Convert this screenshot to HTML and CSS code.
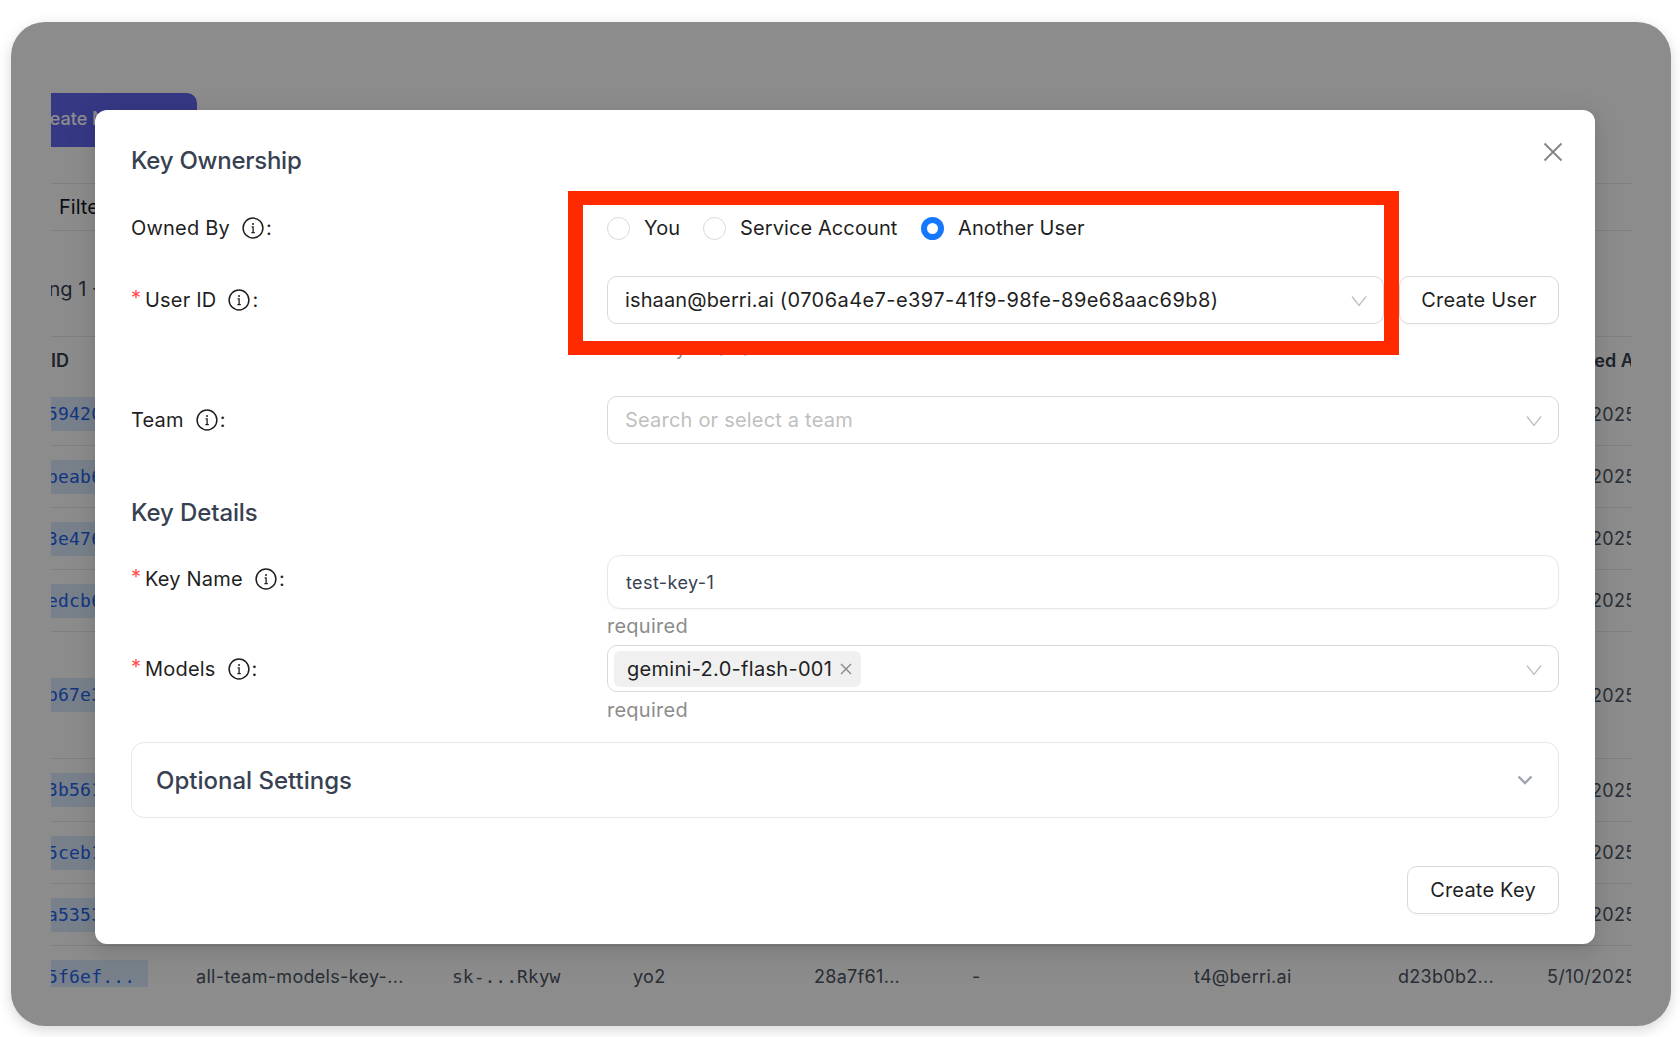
FILE: index.html
```html
<!DOCTYPE html>
<html lang="en">
<head>
<meta charset="utf-8">
<title>Key Ownership</title>
<link rel="stylesheet" href="styles.css">
</head>
<body>
<svg class="defs" width="0" height="0" aria-hidden="true">
  <symbol id="info" viewBox="0 0 22 22">
    <circle cx="11" cy="11" r="9.9" fill="none" stroke="currentColor" stroke-width="1.5"/>
    <circle cx="11" cy="6.9" r="1" fill="currentColor"/>
    <path d="M9.6 9.9H11.1V15.6M9.4 15.7H12.8" fill="none" stroke="currentColor" stroke-width="1.3"/>
  </symbol>
  <symbol id="chev" viewBox="0 0 16 12">
    <path d="M1 1.5 8 10.5 15 1.5" fill="none" stroke="currentColor" stroke-width="1.3"/>
  </symbol>
</svg>
<div class="window">
  <div class="backdrop">
    <div class="bg-button"><span class="bg-button-text">Create New Key</span></div>
    <div class="bg-filter">Filter</div>
    <div class="bg-showing">Showing 1 - 9</div>
    <div class="bg-table">
      <div class="bg-row bg-head"><span>ID</span><span class="date">Created At</span></div>
      <div class="bg-row r63"><span class="id">59420...</span><span class="date">5/10/2025</span></div>
      <div class="bg-row r62"><span class="id">beab6...</span><span class="date">5/10/2025</span></div>
      <div class="bg-row r62"><span class="id">3e476...</span><span class="date">5/10/2025</span></div>
      <div class="bg-row r62"><span class="id">edcb6...</span><span class="date">5/10/2025</span></div>
      <div class="bg-row r127"><span class="id">b67e3...</span><span class="date">5/10/2025</span></div>
      <div class="bg-row r63"><span class="id">3b561...</span><span class="date">5/10/2025</span></div>
      <div class="bg-row r62"><span class="id">5ceb1...</span><span class="date">5/10/2025</span></div>
      <div class="bg-row r62"><span class="id">a5353...</span><span class="date">5/10/2025</span></div>
      <div class="bg-row r62 last">
        <span class="id">5f6ef...</span>
        <span>all-team-models-key-...</span>
        <span class="mono">sk-...Rkyw</span>
        <span>yo2</span>
        <span>28a7f61...</span>
        <span>-</span>
        <span>t4@berri.ai</span>
        <span>d23b0b2...</span>
        <span class="date">5/10/2025</span>
      </div>
    </div>
  </div>

  <div class="overlay"></div>

  <main class="modal">
    <svg class="close" viewBox="0 0 20 20" aria-label="Close"><path d="M1.5 1.5 18.5 18.5M18.5 1.5 1.5 18.5" fill="none" stroke="currentColor" stroke-width="1.9"/></svg>

    <h2 class="section-title">Key Ownership</h2>

    <div class="row row-owned">
      <div class="label">Owned By<svg class="info"><use href="#info"/></svg><span class="colon">:</span></div>
      <div class="radios">
        <span class="radio"></span><span class="radio-text t-you">You</span>
        <span class="radio"></span><span class="radio-text t-service">Service Account</span>
        <span class="radio on"></span><span class="radio-text">Another User</span>
      </div>
    </div>

    <div class="row row-user">
      <div class="label"><span class="req">*</span>User ID<svg class="info"><use href="#info"/></svg><span class="colon">:</span></div>
      <div class="control">
        <div class="user-line">
          <div class="select select-user"><span class="user-mail">ishaan@berri.ai&nbsp;</span><span class="user-uid">(0706a4e7-e397-41f9-98fe-89e68aac69b8)</span><svg class="chev"><use href="#chev"/></svg></div>
          <div class="btn btn-user">Create User</div>
        </div>
        <div class="hint">Select by email address</div>
      </div>
    </div>

    <div class="row row-team">
      <div class="label">Team<svg class="info"><use href="#info"/></svg><span class="colon">:</span></div>
      <div class="select"><span class="placeholder">Search or select a team</span><svg class="chev"><use href="#chev"/></svg></div>
    </div>

    <h2 class="section-title details-title">Key Details</h2>

    <div class="row row-name">
      <div class="label"><span class="req">*</span>Key Name<svg class="info"><use href="#info"/></svg><span class="colon">:</span></div>
      <div class="control">
        <div class="input">test-key-1</div>
        <div class="required">required</div>
      </div>
    </div>

    <div class="row row-models">
      <div class="label"><span class="req">*</span>Models<svg class="info"><use href="#info"/></svg><span class="colon">:</span></div>
      <div class="control">
        <div class="select select-tags">
          <span class="tag">gemini-2.0-flash-001<svg class="tag-x" viewBox="0 0 12 12"><path d="M1 1 11 11M11 1 1 11" fill="none" stroke="currentColor" stroke-width="1.3"/></svg></span>
          <svg class="chev"><use href="#chev"/></svg>
        </div>
        <div class="required">required</div>
      </div>
    </div>

    <div class="accordion">
      <span>Optional Settings</span>
      <svg class="acc-chev" viewBox="0 0 16 10"><path d="M1.5 1.5 8 8 14.5 1.5" fill="none" stroke="currentColor" stroke-width="2.4"/></svg>
    </div>

    <div class="footer"><div class="btn btn-key">Create Key</div></div>
  </main>

  <div class="callout"></div>
</div>
</body>
</html>
```
FILE: styles.css
```css
* { box-sizing: border-box; }

html, body { margin: 0; height: 100%; background: #fff; }

body {
  font-family: Inter, "Noto Sans", sans-serif;
  overflow: hidden;
  position: relative;
}

.defs { position: absolute; }

/* Photographed window */
.window {
  position: absolute;
  left: 11px;
  top: 22px;
  width: 1660px;
  height: 1004px;
  border-radius: 34px;
  background: #fff;
  box-shadow: 0 4px 14px rgba(0, 0, 0, .16);
}

/* Page behind the dialog */
.backdrop {
  position: absolute;
  left: 40px;
  top: 71px;
  width: 1580px;
  height: 894px;
  overflow: hidden;
  font-size: 18px;
  color: #6b7280;
}

.bg-button {
  width: 146px;
  height: 54px;
  padding-bottom: 3px;
  background: #6366f1;
  border-radius: 0 10px 0 0;
  display: flex;
  align-items: center;
  overflow: hidden;
  white-space: nowrap;
}

.bg-button-text {
  color: #fff;
  font-weight: 500;
  margin-left: -21px;
}

.bg-filter {
  height: 48px;
  margin-top: 36px;
  padding-left: 8px;
  line-height: 46px;
  font-size: 20px;
  color: #111827;
  border-top: 1px solid #e5e7eb;
  border-bottom: 1px solid #e5e7eb;
}

.bg-showing {
  height: 105px;
  line-height: 117px;
  font-size: 20px;
  margin-left: -60px;
  color: #374151;
  white-space: nowrap;
}

.bg-row {
  display: grid;
  grid-template-columns: 145px 256px 181px 181px 158px 222px 204px 149px 84px;
  align-items: center;
  border-bottom: 1px solid #e5e7eb;
  white-space: nowrap;
  letter-spacing: .3px;
  color: #4b5563;
}

.bg-row > .date { grid-column: 9; overflow: hidden; }
.last > .date { grid-column: auto; }

.bg-head {
  height: 47px;
  border-bottom: 0;
  border-top: 1px solid #e5e7eb;
  font-weight: 600;
  letter-spacing: 0;
  color: #374151;
}

.r62 { height: 62px; }
.r63 { height: 63px; }
.r127 { height: 127px; }

.id {
  justify-self: start;
  width: 97px;
  height: 34px;
  line-height: 33px;
  background: #dbeafe;
  color: #2563eb;
  font-family: "DejaVu Sans Mono", monospace;
  letter-spacing: .2px;
  overflow: hidden;
  text-indent: -4px;
}

.mono { font-family: "DejaVu Sans Mono", monospace; letter-spacing: 0; }

.overlay {
  position: absolute;
  inset: 0;
  border-radius: 34px;
  background: rgba(0, 0, 0, .45);
}

/* Dialog */
.modal {
  position: absolute;
  left: 84px;
  top: 88px;
  width: 1500px;
  height: 834px;
  padding: 36px 36px 0;
  background: #fff;
  border-radius: 12px;
  box-shadow: 0 6px 16px rgba(0, 0, 0, .08), 0 3px 6px -4px rgba(0, 0, 0, .12), 0 9px 28px 8px rgba(0, 0, 0, .05);
  font-size: 20px;
  color: #1f1f1f;
}

.close {
  position: absolute;
  right: 32px;
  top: 32px;
  width: 20px;
  height: 20px;
  color: #858585;
}

.section-title {
  margin: 0;
  height: 30px;
  font-size: 24px;
  line-height: 30px;
  font-weight: 500;
  letter-spacing: -.25px;
  color: #374151;
}

.details-title { letter-spacing: -.1px; }

.row {
  display: grid;
  grid-template-columns: 476px 1fr;
  align-items: start;
}

.row-owned { margin-top: 28px; height: 48px; }
.row-user { margin-top: 24px; }
.row-team { margin-top: 35px; }
.details-title { margin-top: 54px; }
.row-name { margin-top: 27px; }
.row-models { margin-top: 2px; }

.label {
  display: flex;
  align-items: center;
  height: 48px;
  white-space: nowrap;
  line-height: 24px;
  letter-spacing: .2px;
}

.req {
  color: #ff4d4f;
  width: 14px;
  font-size: 20px;
  line-height: 16px;
  align-self: flex-start;
  margin-top: 14px;
}

.info {
  width: 22px;
  height: 22px;
  margin-left: 12px;
  color: #1f1f1f;
}

.colon { margin-left: 2px; }

.radios {
  display: flex;
  align-items: center;
  height: 48px;
  letter-spacing: .1px;
  white-space: nowrap;
}

.radio {
  flex: none;
  width: 23px;
  height: 23px;
  border: 1px solid #d9d9d9;
  border-radius: 50%;
  background: #fff;
}

.radio.on {
  border: 6.5px solid #1677ff;
}

.radio-text { margin-left: 14px; }
.t-you { margin-right: 25px; width: 34px; }
.t-service { margin-right: 24px; width: 157px; }

.select {
  position: relative;
  display: flex;
  align-items: center;
  height: 48px;
  padding: 0 17px;
  border: 1px solid #d9d9d9;
  border-radius: 10px;
  background: #fff;
  white-space: nowrap;
}

.placeholder { color: #bfbfbf; letter-spacing: .2px; }

.chev {
  position: absolute;
  right: 16px;
  top: 18px;
  width: 16px;
  height: 12px;
  color: #bfbfbf;
}

.user-line { display: flex; }

.select-user { flex: 1; }
.user-mail { letter-spacing: .13px; }
.user-uid { letter-spacing: .43px; }

.btn {
  display: flex;
  align-items: center;
  justify-content: center;
  height: 48px;
  border: 1px solid #d9d9d9;
  border-radius: 10px;
  background: #fff;
  box-shadow: 0 2px 0 rgba(0, 0, 0, .02);
  white-space: nowrap;
  letter-spacing: .2px;
}

.btn-user { width: 160px; margin-left: 15px; }
.btn-key { width: 152px; }

.hint {
  height: 24px;
  margin-top: 13px;
  font-size: 18px;
  line-height: 24px;
  color: #8c8c8c;
}

.input {
  display: flex;
  align-items: center;
  height: 54px;
  padding-left: 18px;
  border: 1px solid #e5e7eb;
  border-radius: 13px;
  font-size: 18px;
  letter-spacing: .4px;
  color: #374151;
  box-shadow: 0 1px 2px rgba(0, 0, 0, .04);
}

.required {
  height: 34px;
  line-height: 34px;
  letter-spacing: .25px;
  color: #8c8c8c;
}

.row-models .required { height: 36px; line-height: 36px; }

.select-tags { height: 47px; padding: 0 6px; }

.tag {
  display: inline-flex;
  align-items: center;
  height: 36px;
  padding: 0 9px 0 13px;
  border-radius: 6px;
  background: #f0f0f0;
  letter-spacing: .3px;
}

.tag-x {
  width: 12px;
  height: 12px;
  margin-left: 8px;
  color: #858585;
}

.accordion {
  display: flex;
  align-items: center;
  justify-content: space-between;
  height: 76px;
  margin-top: 14px;
  padding: 0 25px 0 24px;
  border: 1px solid #e5e7eb;
  border-radius: 13px;
  font-size: 24px;
  font-weight: 500;
  color: #374151;
}

.acc-chev {
  width: 16px;
  height: 10px;
  color: #9ca3af;
}

.footer {
  display: flex;
  justify-content: flex-end;
  margin-top: 48px;
}

/* Red annotation drawn on the screenshot */
.callout {
  position: absolute;
  left: 556.5px;
  top: 169px;
  width: 831px;
  height: 164px;
  border: solid #ff2a00;
  border-width: 14.5px 15px;
}
```
